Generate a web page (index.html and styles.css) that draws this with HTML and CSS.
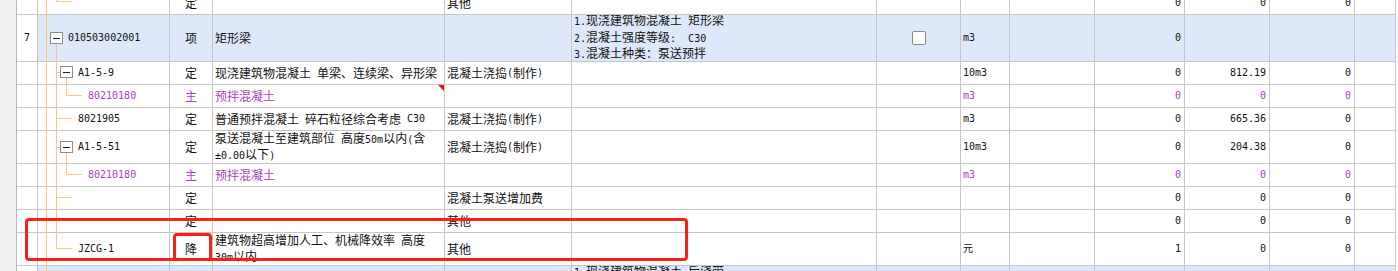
FILE: index.html
```html
<!DOCTYPE html>
<html lang="zh-CN">
<head>
    <meta charset="UTF-8">
    <title>清单定额</title>
    <link rel="stylesheet" href="styles.css">
</head>
<body>

<div class="sheet">
    <div class="grid">
        <!-- row cut off by scroll -->
        <div class="row h23 first">
            <div class="strip"></div><div class="no"></div><div class="code"></div>
            <div class="type">定</div><div class="name"></div><div class="spec">其他</div>
            <div class="desc"></div><div class="chk"></div><div class="unit"></div>
            <div class="num"></div><div class="num">0</div><div class="num">0</div><div class="num">0</div><div></div>
        </div>

        <div class="row h47 hl">
            <div class="strip"></div><div class="no">7</div><div class="code lv0">010503002001</div>
            <div class="type">项</div><div class="name">矩形梁</div><div class="spec"></div>
            <div class="desc"><p><span class="en">1.</span>现浇建筑物混凝土<span class="en"> </span>矩形梁<br><span class="en">2.</span>混凝土强度等级<span class="en">:&nbsp;&nbsp;C30</span><br><span class="en">3.</span>混凝土种类：泵送预拌</p></div>
            <div class="chk"><span class="box"></span></div><div class="unit">m3</div>
            <div class="num"></div><div class="num">0</div><div class="num"></div><div class="num"></div><div></div>
        </div>

        <div class="row h23">
            <div class="strip"></div><div class="no"></div><div class="code lv1">A1-5-9</div>
            <div class="type">定</div><div class="name">现浇建筑物混凝土<span class="en"> </span>单梁、连续梁、异形梁</div><div class="spec">混凝土浇捣<span class="en">(</span>制作<span class="en">)</span></div>
            <div class="desc"></div><div class="chk"></div><div class="unit">10m3</div>
            <div class="num"></div><div class="num">0</div><div class="num">812.19</div><div class="num">0</div><div></div>
        </div>

        <div class="row h23 mat">
            <div class="strip"></div><div class="no"></div><div class="code lv2">80210180</div>
            <div class="type">主</div><div class="name flag">预拌混凝土</div><div class="spec"></div>
            <div class="desc"></div><div class="chk"></div><div class="unit">m3</div>
            <div class="num"></div><div class="num">0</div><div class="num">0</div><div class="num">0</div><div></div>
        </div>

        <div class="row h23">
            <div class="strip"></div><div class="no"></div><div class="code lv1">8021905</div>
            <div class="type">定</div><div class="name">普通预拌混凝土<span class="en"> </span>碎石粒径综合考虑<span class="en"> C30</span></div><div class="spec">混凝土浇捣<span class="en">(</span>制作<span class="en">)</span></div>
            <div class="desc"></div><div class="chk"></div><div class="unit">m3</div>
            <div class="num"></div><div class="num">0</div><div class="num">665.36</div><div class="num">0</div><div></div>
        </div>

        <div class="row h33">
            <div class="strip"></div><div class="no"></div><div class="code lv1">A1-5-51</div>
            <div class="type">定</div><div class="name"><p>泵送混凝土至建筑部位<span class="en"> </span>高度<span class="en">50m</span>以内<span class="en">(</span>含<br><span class="en">±0.00</span>以下<span class="en">)</span></p></div><div class="spec">混凝土浇捣<span class="en">(</span>制作<span class="en">)</span></div>
            <div class="desc"></div><div class="chk"></div><div class="unit">10m3</div>
            <div class="num"></div><div class="num">0</div><div class="num">204.38</div><div class="num">0</div><div></div>
        </div>

        <div class="row h23 mat">
            <div class="strip"></div><div class="no"></div><div class="code lv2">80210180</div>
            <div class="type">主</div><div class="name">预拌混凝土</div><div class="spec"></div>
            <div class="desc"></div><div class="chk"></div><div class="unit">m3</div>
            <div class="num"></div><div class="num">0</div><div class="num">0</div><div class="num">0</div><div></div>
        </div>

        <div class="row h23">
            <div class="strip"></div><div class="no"></div><div class="code"></div>
            <div class="type">定</div><div class="name"></div><div class="spec">混凝土泵送增加费</div>
            <div class="desc"></div><div class="chk"></div><div class="unit"></div>
            <div class="num"></div><div class="num">0</div><div class="num">0</div><div class="num">0</div><div></div>
        </div>

        <div class="row h23">
            <div class="strip"></div><div class="no"></div><div class="code"></div>
            <div class="type">定</div><div class="name"></div><div class="spec">其他</div>
            <div class="desc"></div><div class="chk"></div><div class="unit"></div>
            <div class="num"></div><div class="num">0</div><div class="num">0</div><div class="num">0</div><div></div>
        </div>

        <div class="row h33">
            <div class="strip"></div><div class="no"></div><div class="code lv1">JZCG-1</div>
            <div class="type">降</div><div class="name"><p>建筑物超高增加人工、机械降效率<span class="en"> </span>高度<br><span class="en">30m</span>以内</p></div><div class="spec">其他</div>
            <div class="desc"></div><div class="chk"></div><div class="unit">元</div>
            <div class="num"></div><div class="num">1</div><div class="num">0</div><div class="num">0</div><div></div>
        </div>

        <div class="row h47 hl">
            <div class="strip"></div><div class="no"></div><div class="code"></div>
            <div class="type"></div><div class="name"></div><div class="spec"></div>
            <div class="desc"><p><span class="en">1.</span>现浇建筑物混凝土<span class="en"> </span>后浇带<br><span class="en">2.</span>混凝土强度等级<span class="en">:&nbsp;&nbsp;C30</span><br><span class="en">3.</span>混凝土种类：泵送预拌</p></div>
            <div class="chk"></div><div class="unit"></div>
            <div class="num"></div><div class="num"></div><div class="num"></div><div class="num"></div><div></div>
        </div>
    </div>

    <!-- tree connectors and fold buttons -->
    <svg class="tree" width="1398" height="271" viewBox="0 0 1398 271">
        <g stroke="#fcc77b" stroke-width="1" fill="none">
            <path d="M46.5 0V271"/>
            <path d="M46 37.5H50"/>
            <path d="M56.5 0V1.5H72"/>
            <path d="M56.5 44V248.5H72"/>
            <path d="M56 72.5H60"/>
            <path d="M66.5 78V95.5H82"/>
            <path d="M56 118.5H72"/>
            <path d="M56 147.5H60"/>
            <path d="M66.5 153V174.5H82"/>
            <path d="M56 197.5H72"/>
        </g>
        <g fill="#fff" stroke="#8c8c8c">
            <rect x="50.5" y="32.5" width="12" height="11"/>
            <rect x="60.5" y="66.5" width="12" height="11"/>
            <rect x="60.5" y="141.5" width="12" height="11"/>
        </g>
        <g stroke="#222">
            <path d="M53 38.5H60"/>
            <path d="M63 72.5H70"/>
            <path d="M63 147.5H70"/>
        </g>
    </svg>

    <div class="mark mark-row"></div>
    <div class="mark mark-type"></div>
</div>

</body>
</html>
```

FILE: styles.css
```css
body {
    margin: 0;
    background-color: #fff;
    font-family: "Noto Sans CJK SC", sans-serif;
    font-size: 12px;
    color: #111;
}
.sheet {
    position: relative;
    width: 1398px;
    height: 271px;
    overflow: hidden;
}
.grid {
    width: 1396px;
}
.row {
    display: grid;
    grid-template-columns: 17px 21px 132px 43px 232px 127px 305px 84px 49px 85px 90px 85px 85px 41px;
}
.row > div {
    box-sizing: border-box;
    display: flex;
    align-items: center;
    overflow: hidden;
    white-space: nowrap;
    padding: 0 2px;
    line-height: 14px;
    border-right: 1px solid #c6c6c6;
    border-bottom: 1px solid #c6c6c6;
}
.row p {
    margin: 0;
}
.desc p {
    line-height: 14.5px;
}
.h23 { height: 23px; }
.h33 { height: 33px; }
.h47 { height: 47px; }
.first {
    margin-top: -8px;
}
.row > .strip {
    background-color: #f0f0f0;
    border-bottom: none;
    border-right-color: #b9b9b9;
}
.hl > div:not(.strip):not(.no) {
    background-color: #dde8fb;
}
.no {
    justify-content: center;
    font-family: "DejaVu Sans Mono", monospace;
    font-size: 10px;
}
.code {
    font-family: "DejaVu Sans Mono", monospace;
    font-size: 10px;
}
.lv0 { padding-left: 30px !important; }
.lv1 { padding-left: 40px !important; }
.lv2 { padding-left: 50px !important; }
.type {
    justify-content: center;
}
.chk {
    justify-content: center;
}
.box {
    width: 12px;
    height: 12px;
    border: 1px solid #8a8a8a;
    border-radius: 2px;
    background-color: #fff;
}
.unit {
    font-family: "DejaVu Sans Mono", "Noto Sans CJK SC", monospace;
    font-size: 10px;
}
.num {
    justify-content: flex-end;
    font-family: "DejaVu Sans Mono", monospace;
    font-size: 10px;
    padding-right: 3px !important;
}
.en {
    font-family: "DejaVu Sans Mono", monospace;
    font-size: 10px;
    white-space: pre;
}
.mat > div {
    color: #a83fc3;
}
.flag {
    position: relative;
}
.flag::after {
    content: "";
    position: absolute;
    top: 0;
    right: 0;
    border-top: 6px solid #f01010;
    border-left: 6px solid transparent;
}
.mark {
    position: absolute;
    box-sizing: border-box;
    border: 3px solid #ff1e16;
    border-radius: 4px;
}
.mark-row {
    left: 25px;
    top: 218px;
    width: 663px;
    height: 43px;
}
.mark-type {
    left: 173px;
    top: 233px;
    width: 39px;
    height: 28px;
}
.tree {
    position: absolute;
    top: 0;
    left: 0;
    pointer-events: none;
}
```
